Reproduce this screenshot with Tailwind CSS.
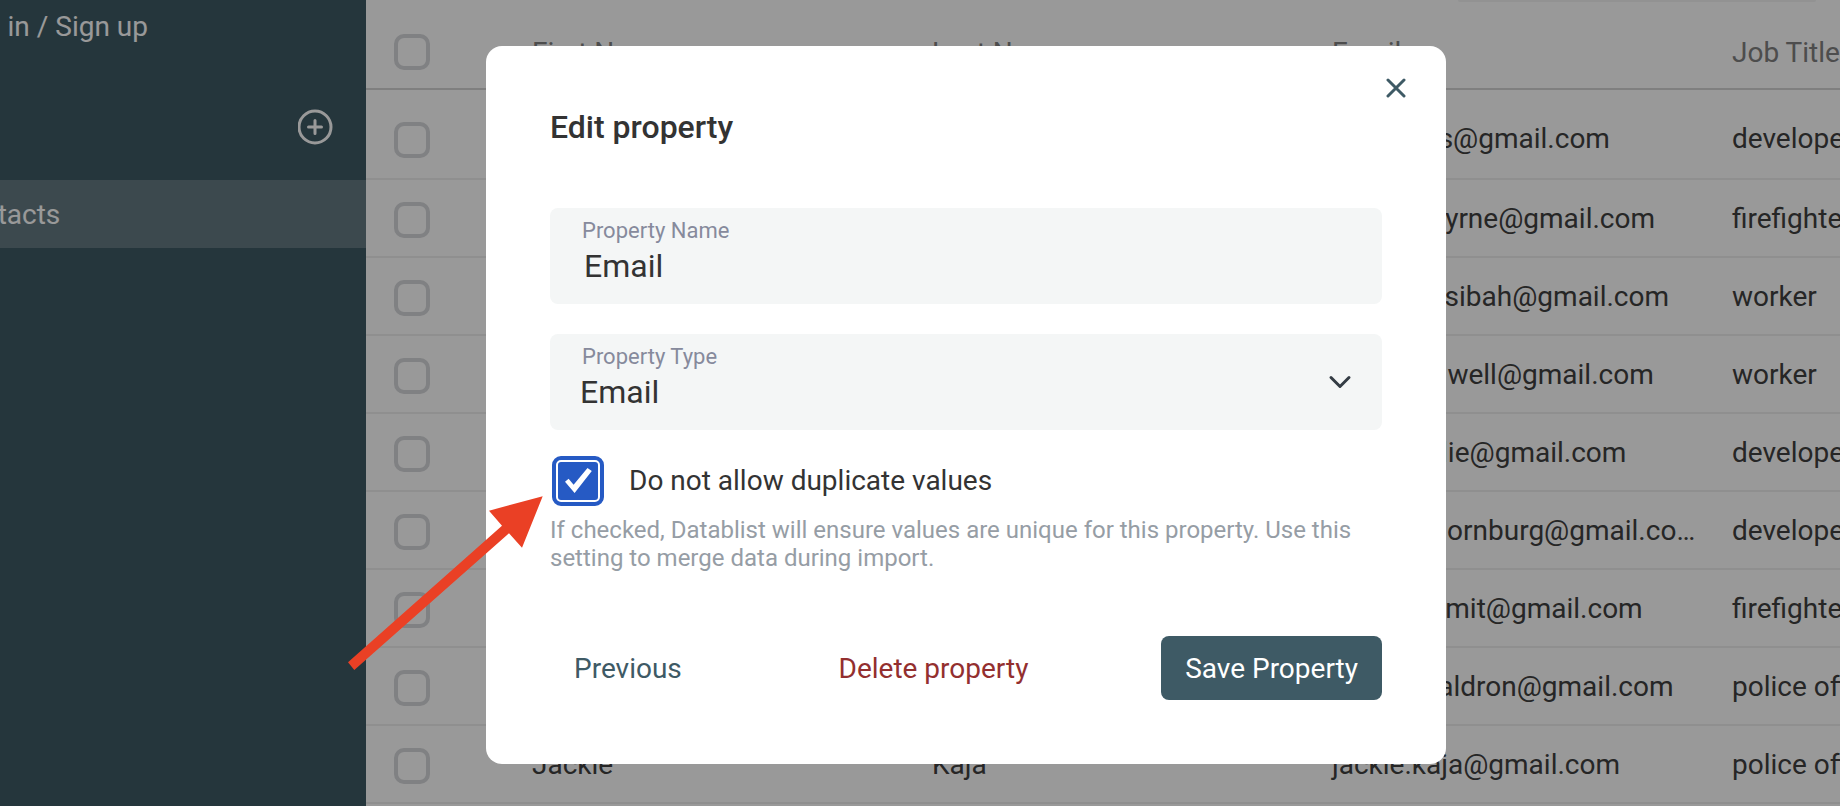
<!DOCTYPE html>
<html lang="en">
<head>
  <meta charset="UTF-8" />
  <meta name="viewport" content="width=device-width, initial-scale=1" />
  <title>Contacts - Edit property</title>
  <script src="https://cdn.jsdelivr.net/npm/@tailwindcss/browser@4"></script>
</head>
<body class="h-screen overflow-hidden bg-white font-[Roboto,sans-serif] text-[28px] leading-[42px] text-[#333]">

<div class="flex h-full overflow-hidden">

  <!-- Sidebar -->
  <aside class="w-[366px] shrink-0 overflow-hidden bg-[#3e5a65] text-white">
    <div class="-ml-[86px]">
      <div class="px-8 pt-[6px] whitespace-nowrap"><a href="#">Sign in / Sign up</a></div>
      <div class="flex justify-end px-8 pt-[61px] pb-[35px]">
        <button type="button" aria-label="New collection">
          <svg class="block w-9 h-9" viewBox="0 0 36 36" fill="none" stroke="currentColor" stroke-width="3" stroke-linecap="round">
            <circle cx="17" cy="18" r="16" />
            <path d="M17 11.5v13M10.5 18h13" />
          </svg>
        </button>
      </div>
      <a href="#" class="flex items-center h-[68px] px-[34px] pt-[2px] bg-white/20">Contacts</a>
    </div>
  </aside>

  <!-- Contacts table -->
  <main class="flex-1 min-w-0 overflow-hidden">
    <div class="flex justify-end pr-6">
      <div class="w-[358px] h-[2px] rounded-b bg-[#f3f4f4]"></div>
    </div>
    <table class="table-fixed w-[1750px] border-separate border-spacing-0 text-left text-[#404040]">
      <thead>
        <tr class="*:h-[88px] *:pt-4 *:border-b-2 *:border-[#d4d4d4] *:font-normal text-[#808080]">
          <th class="w-[150px] pl-7">
            <div class="pb-[2px]">
              <input type="checkbox" aria-label="Select all" class="block appearance-none w-9 h-9 border-4 border-[#d5d7da] rounded-[10px]" />
            </div>
          </th>
          <th class="w-[400px] px-4">First Name</th>
          <th class="w-[400px] px-4">Last Name</th>
          <th class="w-[400px] px-4">Email</th>
          <th class="w-[400px] px-4">Job Title</th>
        </tr>
      </thead>
      <tbody id="contacts"></tbody>
    </table>
  </main>
</div>

<!-- Modal -->
<div class="fixed inset-0 flex items-center justify-center pl-[92px] pt-1 bg-black/40">
  <div role="dialog" aria-labelledby="dialogTitle" class="relative w-full max-w-[960px] px-16 pt-15 pb-16 bg-white rounded-2xl">

    <button type="button" aria-label="Close" class="absolute top-6 right-8 p-2 text-[#3e5a65]">
      <svg class="block w-5 h-5" viewBox="0 0 20 20" fill="none" stroke="currentColor" stroke-width="3" stroke-linecap="round">
        <path d="M2 2l16 16M18 2L2 18" />
      </svg>
    </button>

    <h2 id="dialogTitle" class="mb-15 text-[32px] font-medium">Edit property</h2>

    <form>
      <div class="h-24 mb-[30px] px-8 pt-2 rounded-lg bg-[#f4f6f6]">
        <label for="propertyName" class="block text-[22px] leading-[30px] text-[#868a9c]">Property Name</label>
        <input type="text" id="propertyName" value="Email" class="block w-full h-10 pl-[2px] text-[32px] outline-none" />
      </div>

      <div class="relative h-24 px-[30px] pt-2 rounded-lg bg-[#f4f6f6]">
        <label for="propertyType" class="block pl-[2px] text-[22px] leading-[30px] text-[#868a9c]">Property Type</label>
        <select id="propertyType" class="block w-full h-10 appearance-none text-[32px] leading-10 outline-none">
          <option>Email</option>
          <option>Text</option>
          <option>Number</option>
        </select>
        <svg class="absolute right-[30px] top-10 w-6 h-4 pointer-events-none" viewBox="0 0 24 16" fill="none" stroke="#343c44" stroke-width="3" stroke-linecap="round" stroke-linejoin="round">
          <path d="M3 3.5l9 9 9-9" />
        </svg>
      </div>

      <div class="flex items-center gap-[31px] mt-8 pl-2">
        <div class="relative">
          <input type="checkbox" id="noDuplicates" checked class="block appearance-none w-10 h-[38px] rounded-[3px] bg-[#265ac4] outline-4 outline-offset-2 outline-[#265ac4]" />
          <svg class="absolute inset-0 w-10 h-[38px] pointer-events-none" viewBox="0 0 40 38" fill="#fff">
            <path d="M7 19.7l3.6-3 5 6L29.5 6l4.3 3-17.2 22z" />
          </svg>
        </div>
        <label for="noDuplicates" class="leading-[38px]">Do not allow duplicate values</label>
      </div>
      <p class="mt-4 text-[24px] leading-7 text-[#969da5]">If checked, Datablist will ensure values are unique for this property. Use this setting to merge data during import.</p>

      <div class="flex justify-between mt-16">
        <button type="button" class="h-16 px-6 pt-[2px] text-[#3e5a65]">Previous</button>
        <button type="button" class="h-16 px-6 pt-[2px] text-[#932f2f]">Delete property</button>
        <button type="button" class="h-16 px-6 pt-[2px] rounded-lg bg-[#3e5a65] text-white">Save Property</button>
      </div>
    </form>

    <!-- Arrow pointing at the checkbox -->
    <svg class="absolute top-[450px] -left-[138px] w-[195px] h-[174px] pointer-events-none" viewBox="0 0 195 174" fill="#ea4025">
      <path d="M0 166.3L154 29.7 141 14.7 194.7.3 174 51.7 161 37.3 6.3 174z" />
    </svg>
  </div>
</div>

<script>
  const contacts = [
    ["Tim", "Evans", "tim.evans@gmail.com", "developer"],
    ["Daniela", "Byrne", "daniela.byrne@gmail.com", "firefighter"],
    ["Nicole", "Hasibah", "nicole.hasibah@gmail.com", "worker"],
    ["Greg", "Caldwell", "greg.caldwell@gmail.com", "worker"],
    ["Helen", "Wylie", "helen.wylie@gmail.com", "developer"],
    ["Joseph", "Thornburg", "joseph.thornburg@gmail.com", "developer"],
    ["Anna", "Schmit", "anna.schmit@gmail.com", "firefighter"],
    ["Teresa", "Waldron", "teresa.waldron@gmail.com", "police officer"],
    ["Jackie", "Kaja", "jackie.kaja@gmail.com", "police officer"]
  ];

  document.getElementById("contacts").innerHTML = contacts.map(([first, last, email, job], i) => `
    <tr class="${i === 0 ? "*:h-[90px] *:pt-[10px]" : "*:h-[78px] *:pt-[2px]"} *:border-b-2 *:border-[#eee]">
      <td class="pl-7">
        <div class="pt-[2px]">
          <input type="checkbox" aria-label="Select ${first} ${last}" class="block appearance-none w-9 h-9 border-4 border-[#d5d7da] rounded-[10px]" />
        </div>
      </td>
      <td class="pl-4 pr-5 truncate">${first}</td>
      <td class="pl-4 pr-5 truncate">${last}</td>
      <td class="pl-4 pr-5 truncate">${email}</td>
      <td class="pl-4 pr-5 truncate">${job}</td>
    </tr>
  `).join("");
</script>

</body>
</html>
